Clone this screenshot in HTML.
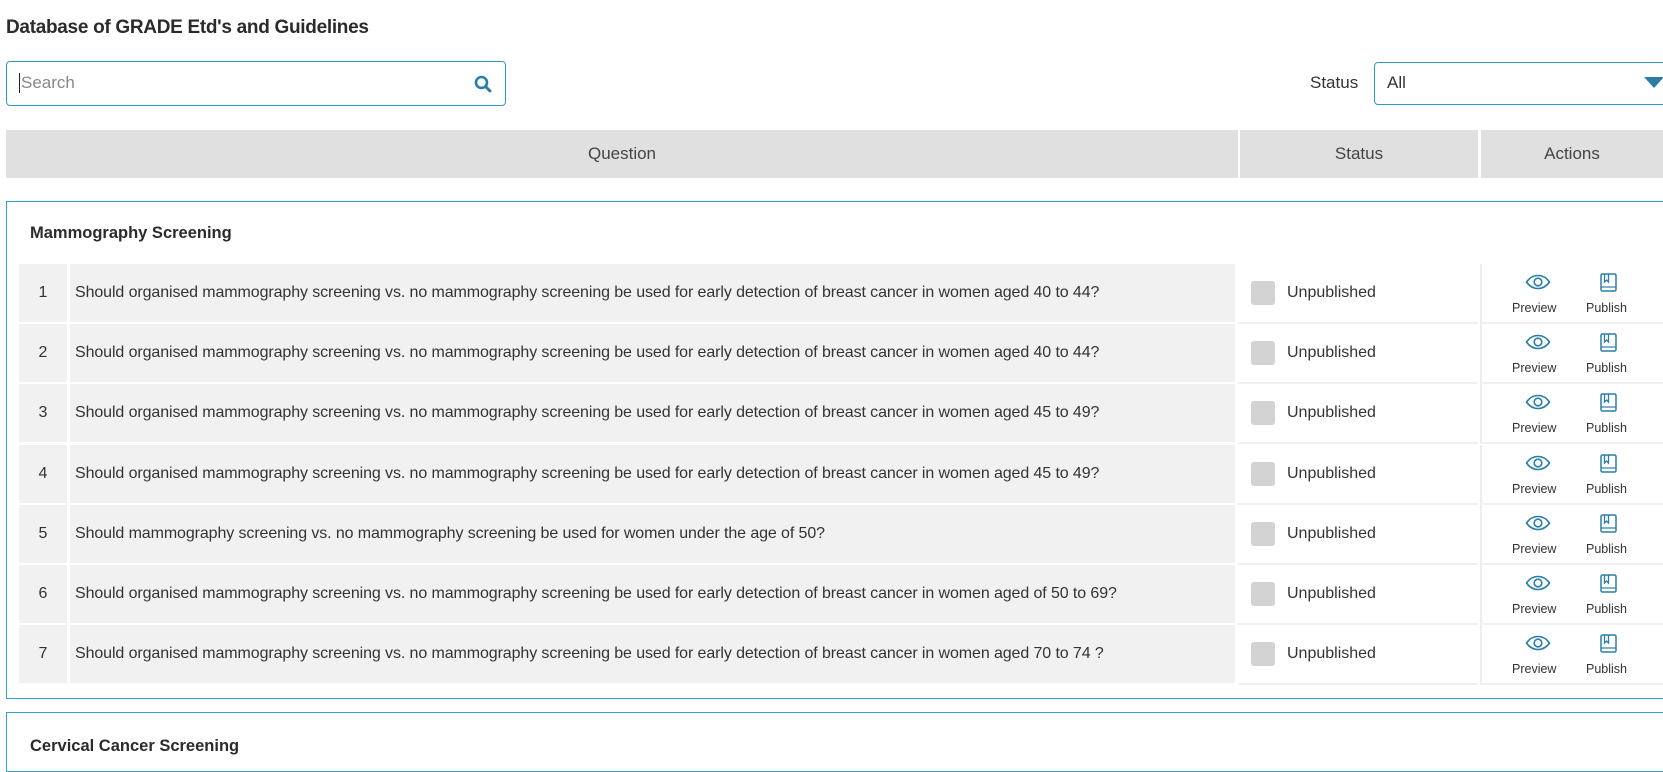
<!DOCTYPE html>
<html><head><meta charset="utf-8"><style>
*{box-sizing:border-box;margin:0;padding:0}
body{width:1663px;height:738px;overflow:hidden;background:#fff;font-family:"Liberation Sans",sans-serif;color:#333;position:relative}
.abs{position:absolute}
h1{position:absolute;left:6px;top:17px;font-size:19px;font-weight:bold;color:#2b2b2b;letter-spacing:-0.3px}
.search{left:6px;top:61px;width:500px;height:45px;border:1px solid #2a9ac0;border-radius:4px}
.search span{position:absolute;left:12px;top:11px;font-size:17px;color:#888;border-left:1px solid #222;padding-left:1px}
.sel{left:1374px;top:62px;width:320px;height:43px;border:1px solid #2a9ac0;border-radius:4px}
.hdr{top:130px;height:48px;background:#e0e0e0;font-size:17px;color:#444;display:flex;align-items:center;justify-content:center}
.box{left:6px;width:1680px;border:1px solid #2ba4c8}
.num,.q{background:#f1f1f1;height:58px;display:flex;align-items:center;font-size:16px;color:#333}
.num{left:19px;width:48px;justify-content:center}
.q{left:70px;width:1165px;padding-left:5px;letter-spacing:-0.1px}
.st{left:1238px;width:240px;height:60px;display:flex;align-items:center;font-size:16px;border-bottom:2px solid #f0f0f0}
.st i{display:inline-block;width:24px;height:24px;background:#d3d3d3;border-radius:3px;margin:0 12px 0 13px}
.ac{left:1480px;width:190px;height:60px;border-left:2px solid #eee;border-bottom:2px solid #f0f0f0;font-size:12.5px;color:#333}
.ac .p{position:absolute;left:30px;top:37px}
.ac .u{position:absolute;left:104px;top:37px}
</style></head><body>
<h1>Database of GRADE Etd's and Guidelines</h1>
<div class="abs search"><span>Search</span>
<svg class="abs" style="left:467px;top:13px" width="18" height="18" viewBox="0 0 18 18"><circle cx="7.5" cy="7.5" r="5.5" fill="none" stroke="#2a7ea6" stroke-width="2.6"/><path d="M11.5 11.5L16 16" stroke="#2a7ea6" stroke-width="3" stroke-linecap="round"/></svg></div>
<div class="abs" style="left:1310px;top:73px;font-size:17px">Status</div>
<div class="abs sel"><span class="abs" style="left:12px;top:10px;font-size:17px">All</span>
<svg class="abs" style="left:269px;top:14px" width="20" height="12"><path d="M0 0H20L10 11Z" fill="#2a7ea6"/></svg></div>
<div class="abs hdr" style="left:6px;width:1232px">Question</div>
<div class="abs hdr" style="left:1240px;width:238px">Status</div>
<div class="abs hdr" style="left:1481px;width:182px">Actions</div>
<div class="abs box" style="top:201px;height:498px"></div>
<div class="abs box" style="top:712px;height:60px"></div>
<div class="abs" style="left:30px;top:224px;font-size:16.5px;font-weight:bold;color:#2b2b2b">Mammography Screening</div>
<div class="abs" style="left:30px;top:737px;font-size:16.5px;font-weight:bold;color:#2b2b2b">Cervical Cancer Screening</div>
<div id="rows"></div>
<script>
var q=["Should organised mammography screening vs. no mammography screening be used for early detection of breast cancer in women aged 40 to 44?","Should organised mammography screening vs. no mammography screening be used for early detection of breast cancer in women aged 40 to 44?","Should organised mammography screening vs. no mammography screening be used for early detection of breast cancer in women aged 45 to 49?","Should organised mammography screening vs. no mammography screening be used for early detection of breast cancer in women aged 45 to 49?","Should mammography screening vs. no mammography screening be used for women under the age of 50?","Should organised mammography screening vs. no mammography screening be used for early detection of breast cancer in women aged of 50 to 69?","Should organised mammography screening vs. no mammography screening be used for early detection of breast cancer in women aged 70 to 74 ?"];
var h="";
for(var i=0;i<7;i++){var t=264+i*60.2;
h+='<div class="abs num" style="top:'+t+'px">'+(i+1)+'</div><div class="abs q" style="top:'+t+'px">'+q[i]+'</div><div class="abs st" style="top:'+t+'px"><i></i>Unpublished</div><div class="abs ac" style="top:'+t+'px"><svg class="abs" style="left:43px;top:10px" width="26" height="16" viewBox="0 0 26 16"><path d="M1.5 8C5 3 9 1.5 13 1.5S21 3 24.5 8C21 13 17 14.5 13 14.5S5 13 1.5 8Z" fill="none" stroke="#2a7ea6" stroke-width="1.6"/><circle cx="13" cy="8" r="3.8" fill="none" stroke="#2a7ea6" stroke-width="1.6"/></svg><svg class="abs" style="left:118px;top:9px" width="17" height="19" viewBox="0 0 17 19"><rect x="1" y="1" width="15" height="17" rx="1.5" fill="none" stroke="#2a7ea6" stroke-width="1.5"/><path d="M4.5 1V9L6.5 7L8.5 9V1" fill="none" stroke="#2a7ea6" stroke-width="1.3"/><path d="M1 14H16" stroke="#2a7ea6" stroke-width="1.2"/></svg><span class="p">Preview</span><span class="u">Publish</span></div>';}
document.getElementById("rows").innerHTML=h;
</script>
</body></html>
